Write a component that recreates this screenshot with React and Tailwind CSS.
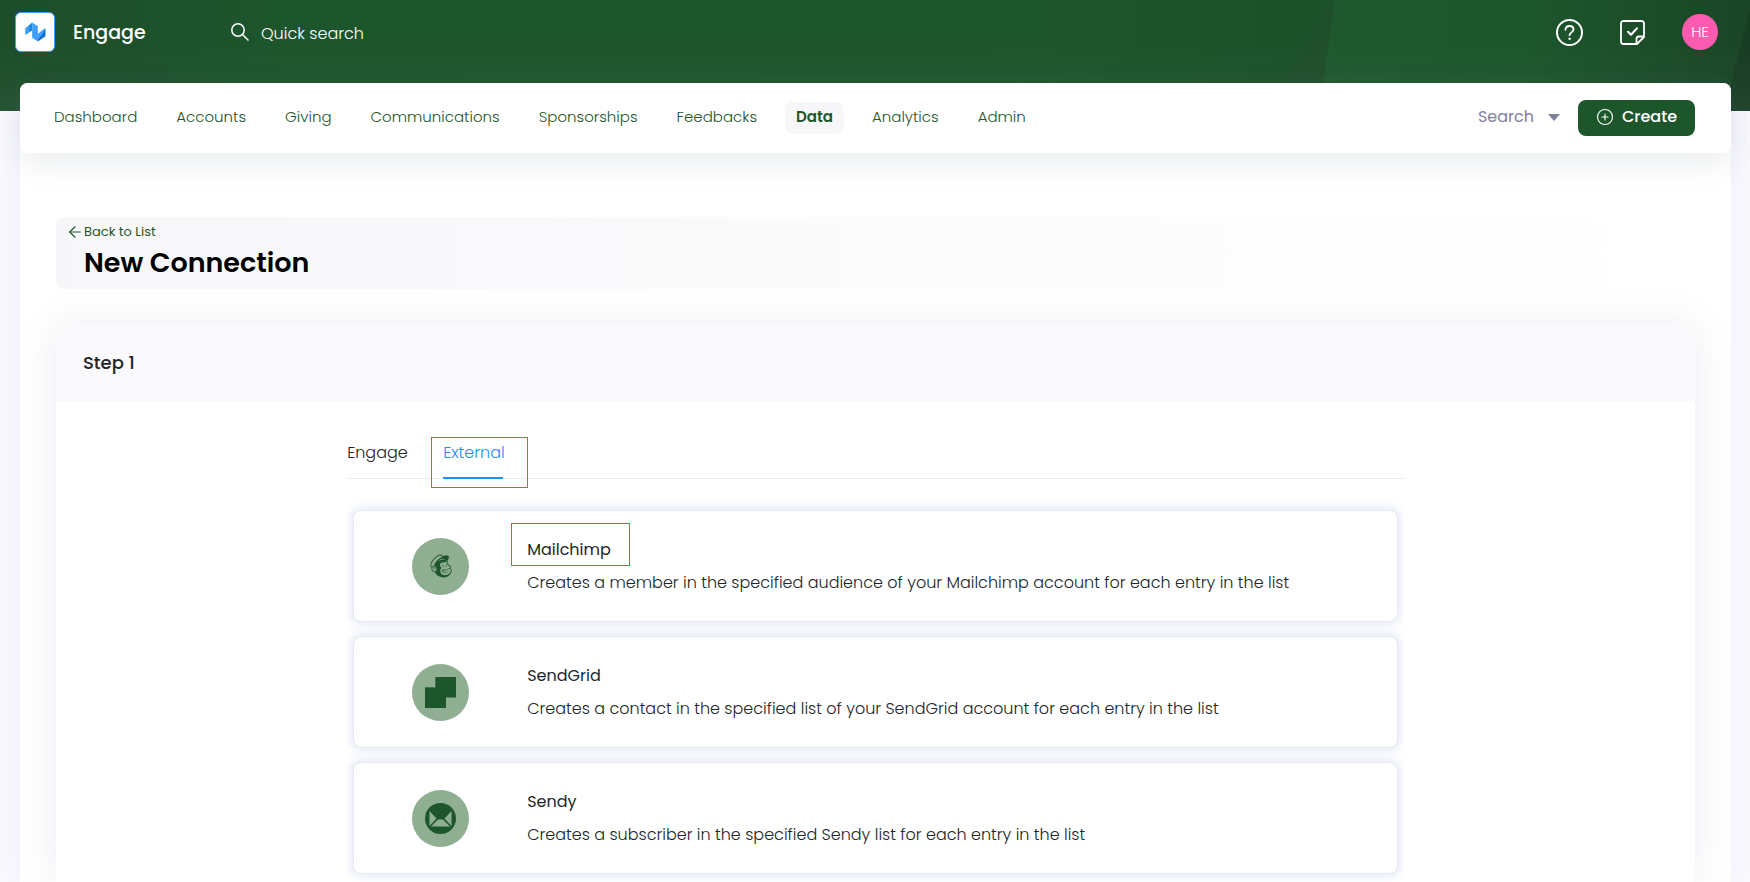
import { ArrowLeft, CirclePlus } from 'lucide-react'
import { FaMailchimp } from 'react-icons/fa'
import clsx from 'clsx'

const NAV_ITEMS = [
  'Dashboard',
  'Accounts',
  'Giving',
  'Communications',
  'Sponsorships',
  'Feedbacks',
  'Data',
  'Analytics',
  'Admin',
]

const CONNECTIONS = [
  {
    id: 'mailchimp',
    name: 'Mailchimp',
    description: 'Creates a member in the specified audience of your Mailchimp account for each entry in the list',
    icon: MailchimpIcon,
    highlighted: true,
  },
  {
    id: 'sendgrid',
    name: 'SendGrid',
    description: 'Creates a contact in the specified list of your SendGrid account for each entry in the list',
    icon: SendGridIcon,
  },
  {
    id: 'sendy',
    name: 'Sendy',
    description: 'Creates a subscriber in the specified Sendy list for each entry in the list',
    icon: SendyIcon,
  },
]

function MailchimpIcon() {
  return <FaMailchimp className="h-[26px] w-[26px]" aria-hidden="true" />
}

function SendGridIcon() {
  return (
    <svg viewBox="0 0 31 31" className="h-[31px] w-[31px]" fill="currentColor" aria-hidden="true">
      <path d="M10.500 0H31v20.500H21V31H0V10.500h10.500z" />
      <path d="M0 10.500h10.500V0" fill="none" stroke="#3f7350" strokeWidth="1" />
    </svg>
  )
}

function SendyIcon() {
  return (
    <svg viewBox="0 0 31 31" className="h-[31px] w-[31px]" aria-hidden="true">
      <circle cx="15.500" cy="15.500" r="15.500" fill="#1e562c" />
      <path d="M4.500 8l7 7.500-7 7.500zM26.500 8l-7 7.500 7 7.500zM6 23.500l7-7h5l7 7z" fill="#8fae92" />
    </svg>
  )
}

function Logo() {
  return (
    <svg viewBox="0 0 40 40" className="h-full w-full" aria-hidden="true">
      <path d="M10 16l7-6v8.500l-7 4.500z" fill="#1c84e8" />
      <path d="M10 16.500l4-3v6l-4 3.500z" fill="#3f9ffb" />
      <path d="M17 10l6 4v16l-6-4z" fill="#3f9ffb" />
      <path d="M23 22l8-6v8.500L23 30z" fill="#0b6fd6" />
      <path d="M23 22l8-6-3 6-5 6z" fill="#3f9ffb" />
    </svg>
  )
}

function HeaderBackdrop() {
  return (
    <svg
      className="absolute inset-0 -z-10 h-full w-full"
      viewBox="0 0 1750 111"
      preserveAspectRatio="none"
      aria-hidden="true"
    >
      <defs>
        <linearGradient id="base" x1="0" x2="1" y1="0" y2="0">
          <stop offset="0" stopColor="#1d4d2a" />
          <stop offset="0.15" stopColor="#1d552c" />
          <stop offset="0.6" stopColor="#1e562c" />
          <stop offset="0.75" stopColor="#1c512a" />
        </linearGradient>
        <linearGradient id="facet" x1="0" x2="1" y1="0" y2="0">
          <stop offset="0" stopColor="#1e592e" />
          <stop offset="0.5" stopColor="#1d562c" />
          <stop offset="1" stopColor="#1a4526" />
        </linearGradient>
        <linearGradient id="glow" x1="0" x2="0" y1="0" y2="1">
          <stop offset="0.4" stopColor="#fff" stopOpacity="0" />
          <stop offset="1" stopColor="#fff" stopOpacity="0.05" />
        </linearGradient>
      </defs>
      <path d="M0 0h1750v111H0z" fill="url(#base)" />
      <path d="M1335 0l-12 83h-38z" fill="#1f4f2a" />
      <path d="M1335 0h415v111h-431z" fill="url(#facet)" />
      <path d="M1750 10v101h-26z" fill="#173d23" />
      <path d="M0 0h1750v111H0z" fill="url(#glow)" />
    </svg>
  )
}

function TopBar() {
  return (
    <header className="relative isolate flex h-[111px] items-start justify-between pr-8 pl-[15px]">
      <HeaderBackdrop />
      <div className="flex h-16 items-center">
        <a href="#home" className="flex items-center gap-[18px] text-white">
          <span className="h-10 w-10 rounded-md border border-[#3f9ffb] bg-white">
            <Logo />
          </span>
          <span className="w-20 pt-[2px] text-[19px] leading-8 font-medium">Engage</span>
        </a>
        <label className="ml-[78px] flex items-center gap-3">
          <svg viewBox="0 0 18 18" className="h-[18px] w-[18px]" fill="none" stroke="#fff" strokeWidth="1.500" aria-hidden="true">
            <circle cx="7" cy="7" r="6.200" />
            <path d="M11.500 11.500l6 6" />
          </svg>
          <input
            type="text"
            aria-label="Quick search"
            placeholder="Quick search"
            className="h-9 w-48 bg-transparent pt-[2px] text-base leading-8 font-light text-white outline-none placeholder:text-white"
          />
        </label>
      </div>
      <div className="flex h-16 items-center">
        <button type="button" aria-label="Help" className="text-white">
          <svg viewBox="0 0 27 27" className="h-[27px] w-[27px]" fill="none" stroke="currentColor" strokeLinecap="round" aria-hidden="true">
            <circle cx="13.500" cy="13.500" r="12.500" strokeWidth="2" />
            <path d="M9.500 10.800c0-2.300 1.700-3.800 4-3.800s4 1.500 4 3.500c0 2.700-4 3-4 5.700" strokeWidth="1.800" />
            <circle cx="13.500" cy="19.800" r="0.800" fill="currentColor" />
          </svg>
        </button>
        <button type="button" aria-label="Tasks" className="ml-[37px] text-white">
          <svg viewBox="0 0 25 25" className="h-[25px] w-[25px]" fill="none" stroke="currentColor" strokeWidth="1.800" strokeLinejoin="round" aria-hidden="true">
            <path d="M3.500 1h18A2.500 2.500 0 0 1 24 3.500v13.500L17 24H3.500A2.500 2.500 0 0 1 1 21.500v-18A2.500 2.500 0 0 1 3.500 1z" />
            <path d="M24 16.500h-5a2.500 2.500 0 0 0-2.500 2.500v5" />
            <path d="M8 11.800l3 3 6-6.500" strokeWidth="2" strokeLinecap="round" />
          </svg>
        </button>
        <button type="button" className="ml-[37px] h-9 w-9 rounded-full bg-[#fb5bae] text-[15px] font-light text-white">
          HE
        </button>
      </div>
    </header>
  )
}

function MainNav() {
  return (
    <nav className="flex h-[70px] items-center justify-between rounded-lg bg-white pr-9 pl-[23px] shadow-[0_10px_30px_0_rgba(82,103,125,0.12)]">
      <ul className="flex items-center gap-[17px]">
        {NAV_ITEMS.map(item => (
          <li key={item}>
            <a
              href={`#${item.toLowerCase()}`}
              className={clsx(
                'flex h-8 items-center rounded-lg px-[11px] pb-[2px] text-[15px] text-[#1e562c]',
                item === 'Data' ? 'bg-[#f7f7fa] font-semibold' : 'font-light',
              )}
            >
              {item}
            </a>
          </li>
        ))}
      </ul>
      <div className="flex items-center">
        <button type="button" className="flex items-center gap-[14px] pb-[2px] text-base text-[#80809b]">
          Search
          <svg viewBox="0 0 12 7" className="h-[7px] w-3" fill="#80809b" aria-hidden="true">
            <path d="M0 0h12L6 7z" />
          </svg>
        </button>
        <button
          type="button"
          className="ml-[18px] flex h-9 w-[117px] items-center justify-center gap-2 rounded-lg bg-[#1e562c] pb-[2px] text-base font-medium text-white"
        >
          <CirclePlus className="h-[18px] w-[18px]" strokeWidth={1.5} />
          Create
        </button>
      </div>
    </nav>
  )
}

function ConnectionCard({ connection }) {
  const Icon = connection.icon
  return (
    <li className="flex h-28 items-center rounded-lg border border-[#e6e8f4] bg-white pl-[58px] shadow-[0_0_10px_2px_rgba(160,180,225,0.3)]">
      <span className="flex h-[57px] w-[57px] shrink-0 items-center justify-center rounded-full bg-[#8fae92] text-[#1e562c]">
        <Icon />
      </span>
      <div className="ml-[58px]">
        <h3 className="relative text-base leading-[33px] text-[#212529]">
          {connection.name}
          {connection.highlighted && (
            <span className="absolute -top-[10px] -left-4 h-[43px] w-[119px] border border-[#f04848]" />
          )}
        </h3>
        <p className="text-base leading-[33px] font-light text-[#212529]">{connection.description}</p>
      </div>
    </li>
  )
}

export default function App() {
  return (
    <div className="flex min-h-screen flex-col bg-[#f9f9fe] font-['Poppins','Inter',sans-serif]">
      <TopBar />
      <div className="relative mr-[19px] -mt-7 ml-5 flex flex-1 flex-col rounded-t-lg bg-white shadow-[0_0_30px_0_rgba(82,63,150,0.05)]">
        <MainNav />
        <main className="flex flex-1 flex-col px-9 pt-16">
          <div className="flex h-[72px] flex-col rounded-lg bg-linear-to-r from-[#f7f7fa] to-white px-[10px]">
            <a href="#list" className="flex h-[30px] items-center text-[13px] text-[#1e562c]">
              <ArrowLeft className="h-[18px] w-[18px]" strokeWidth={1.5} />
              Back to List
            </a>
            <h1 className="pl-[18px] text-[27px] leading-8 font-semibold text-black">New Connection</h1>
          </div>

          <section className="mt-[35px] flex flex-1 flex-col rounded-t-lg bg-white shadow-[0_0_40px_0_rgba(82,90,140,0.10)]">
            <h2 className="flex h-[77px] items-center rounded-t-lg bg-[#fafafc] px-[27px] text-lg font-medium text-[#212529]">
              Step 1
            </h2>
            <div className="px-[27px] pt-9">
              <div className="mx-auto w-2/3">
                <div role="tablist" className="flex h-[42px] gap-9 border-b border-[#ebedf0] text-base font-light">
                  <button type="button" role="tab" aria-selected="false" className="flex h-[42px] w-[60px] pt-1 text-[#212529]">
                    Engage
                  </button>
                  <button
                    type="button"
                    role="tab"
                    aria-selected="true"
                    className="relative flex h-[42px] w-[60px] border-b-2 border-[#1890ff] pt-1 text-[#1890ff]"
                  >
                    External
                    <span className="absolute top-0 -left-3 h-[51px] w-[97px] border border-[#f04848]" />
                  </button>
                </div>
                <ul className="flex flex-col gap-[14px] overflow-hidden px-[6px] pt-[31px] pb-2">
                  {CONNECTIONS.map(connection => (
                    <ConnectionCard key={connection.id} connection={connection} />
                  ))}
                </ul>
              </div>
            </div>
          </section>
        </main>
      </div>
    </div>
  )
}
